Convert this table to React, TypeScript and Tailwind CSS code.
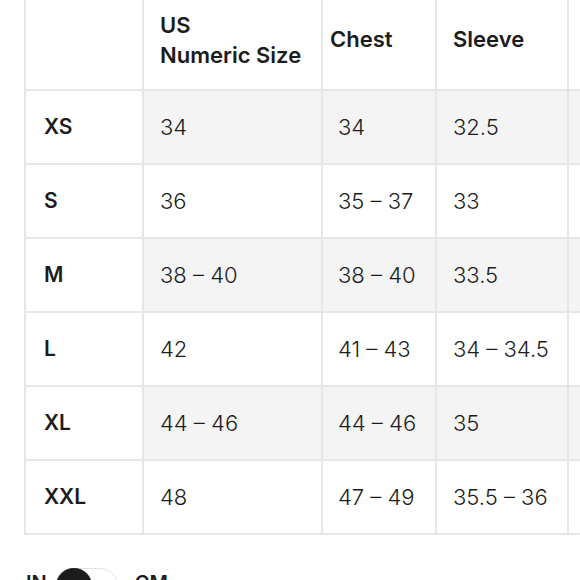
import React, { useState } from 'react';

const ROWS = [
  { size: 'XS', us: '34', chest: '34', sleeve: '32.5' },
  { size: 'S', us: '36', chest: '35 – 37', sleeve: '33' },
  { size: 'M', us: '38 – 40', chest: '38 – 40', sleeve: '33.5' },
  { size: 'L', us: '42', chest: '41 – 43', sleeve: '34 – 34.5' },
  { size: 'XL', us: '44 – 46', chest: '44 – 46', sleeve: '35' },
  { size: 'XXL', us: '48', chest: '47 – 49', sleeve: '35.5 – 36' },
];

const cols = 'grid grid-cols-[118px_179px_114px_132px_80px]';
const cell = 'border-r-2 border-b-2 border-[#e6e6e6] flex items-center';

export default function App() {
  const [cm, setCm] = useState(false);

  return (
    <div className="w-[580px] h-[580px] overflow-hidden bg-white text-[#1c1c1c]" style={{ fontFamily: 'Inter, "Liberation Sans", sans-serif' }}>
      <div className="pl-[24px] -mt-[10px]">
        <div className={`${cols} border-l-2 border-[#e6e6e6] w-max`}>
          <div className={`${cell} h-[101px]`} />
          <div className={`${cell} h-[101px] pl-[16px] text-[22px] font-semibold leading-[30px]`}>
            <div>US<br />Numeric Size</div>
          </div>
          <div className={`${cell} h-[101px] pl-[7px] text-[22px] font-semibold`}>Chest</div>
          <div className={`${cell} h-[101px] pl-[16px] text-[22px] font-semibold`}>Sleeve</div>
          <div className={`${cell} h-[101px]`} />

          {ROWS.map((r, i) => {
            const bg = i % 2 === 0 ? 'bg-[#f4f4f4]' : 'bg-white';
            return (
              <React.Fragment key={r.size}>
                <div className={`${cell} h-[74px] pl-[18px] text-[21px] font-semibold`}>{r.size}</div>
                <div className={`${cell} ${bg} h-[74px] pl-[16px] text-[22px] font-light`}>{r.us}</div>
                <div className={`${cell} ${bg} h-[74px] pl-[15px] text-[22px] font-light`}>{r.chest}</div>
                <div className={`${cell} ${bg} h-[74px] pl-[16px] text-[22px] font-light`}>{r.sleeve}</div>
                <div className={`${cell} ${bg} h-[74px]`} />
              </React.Fragment>
            );
          })}
        </div>
      </div>

      <div className="flex items-start gap-[8px] pl-[26px] mt-[33px]">
        <span className="text-[20px] font-semibold leading-[24px] mt-[3px]">IN</span>
        <button
          onClick={() => setCm(!cm)}
          className={`w-[63px] h-[36px] rounded-full border border-[#e2e2e2] bg-white flex items-center ${cm ? 'justify-end' : 'justify-start'}`}
        >
          <span className="w-[36px] h-[36px] rounded-full bg-[#1c1c1c]" />
        </button>
        <span className="text-[20px] font-semibold leading-[24px] mt-[3px] ml-[9px]">CM</span>
      </div>
    </div>
  );
}
